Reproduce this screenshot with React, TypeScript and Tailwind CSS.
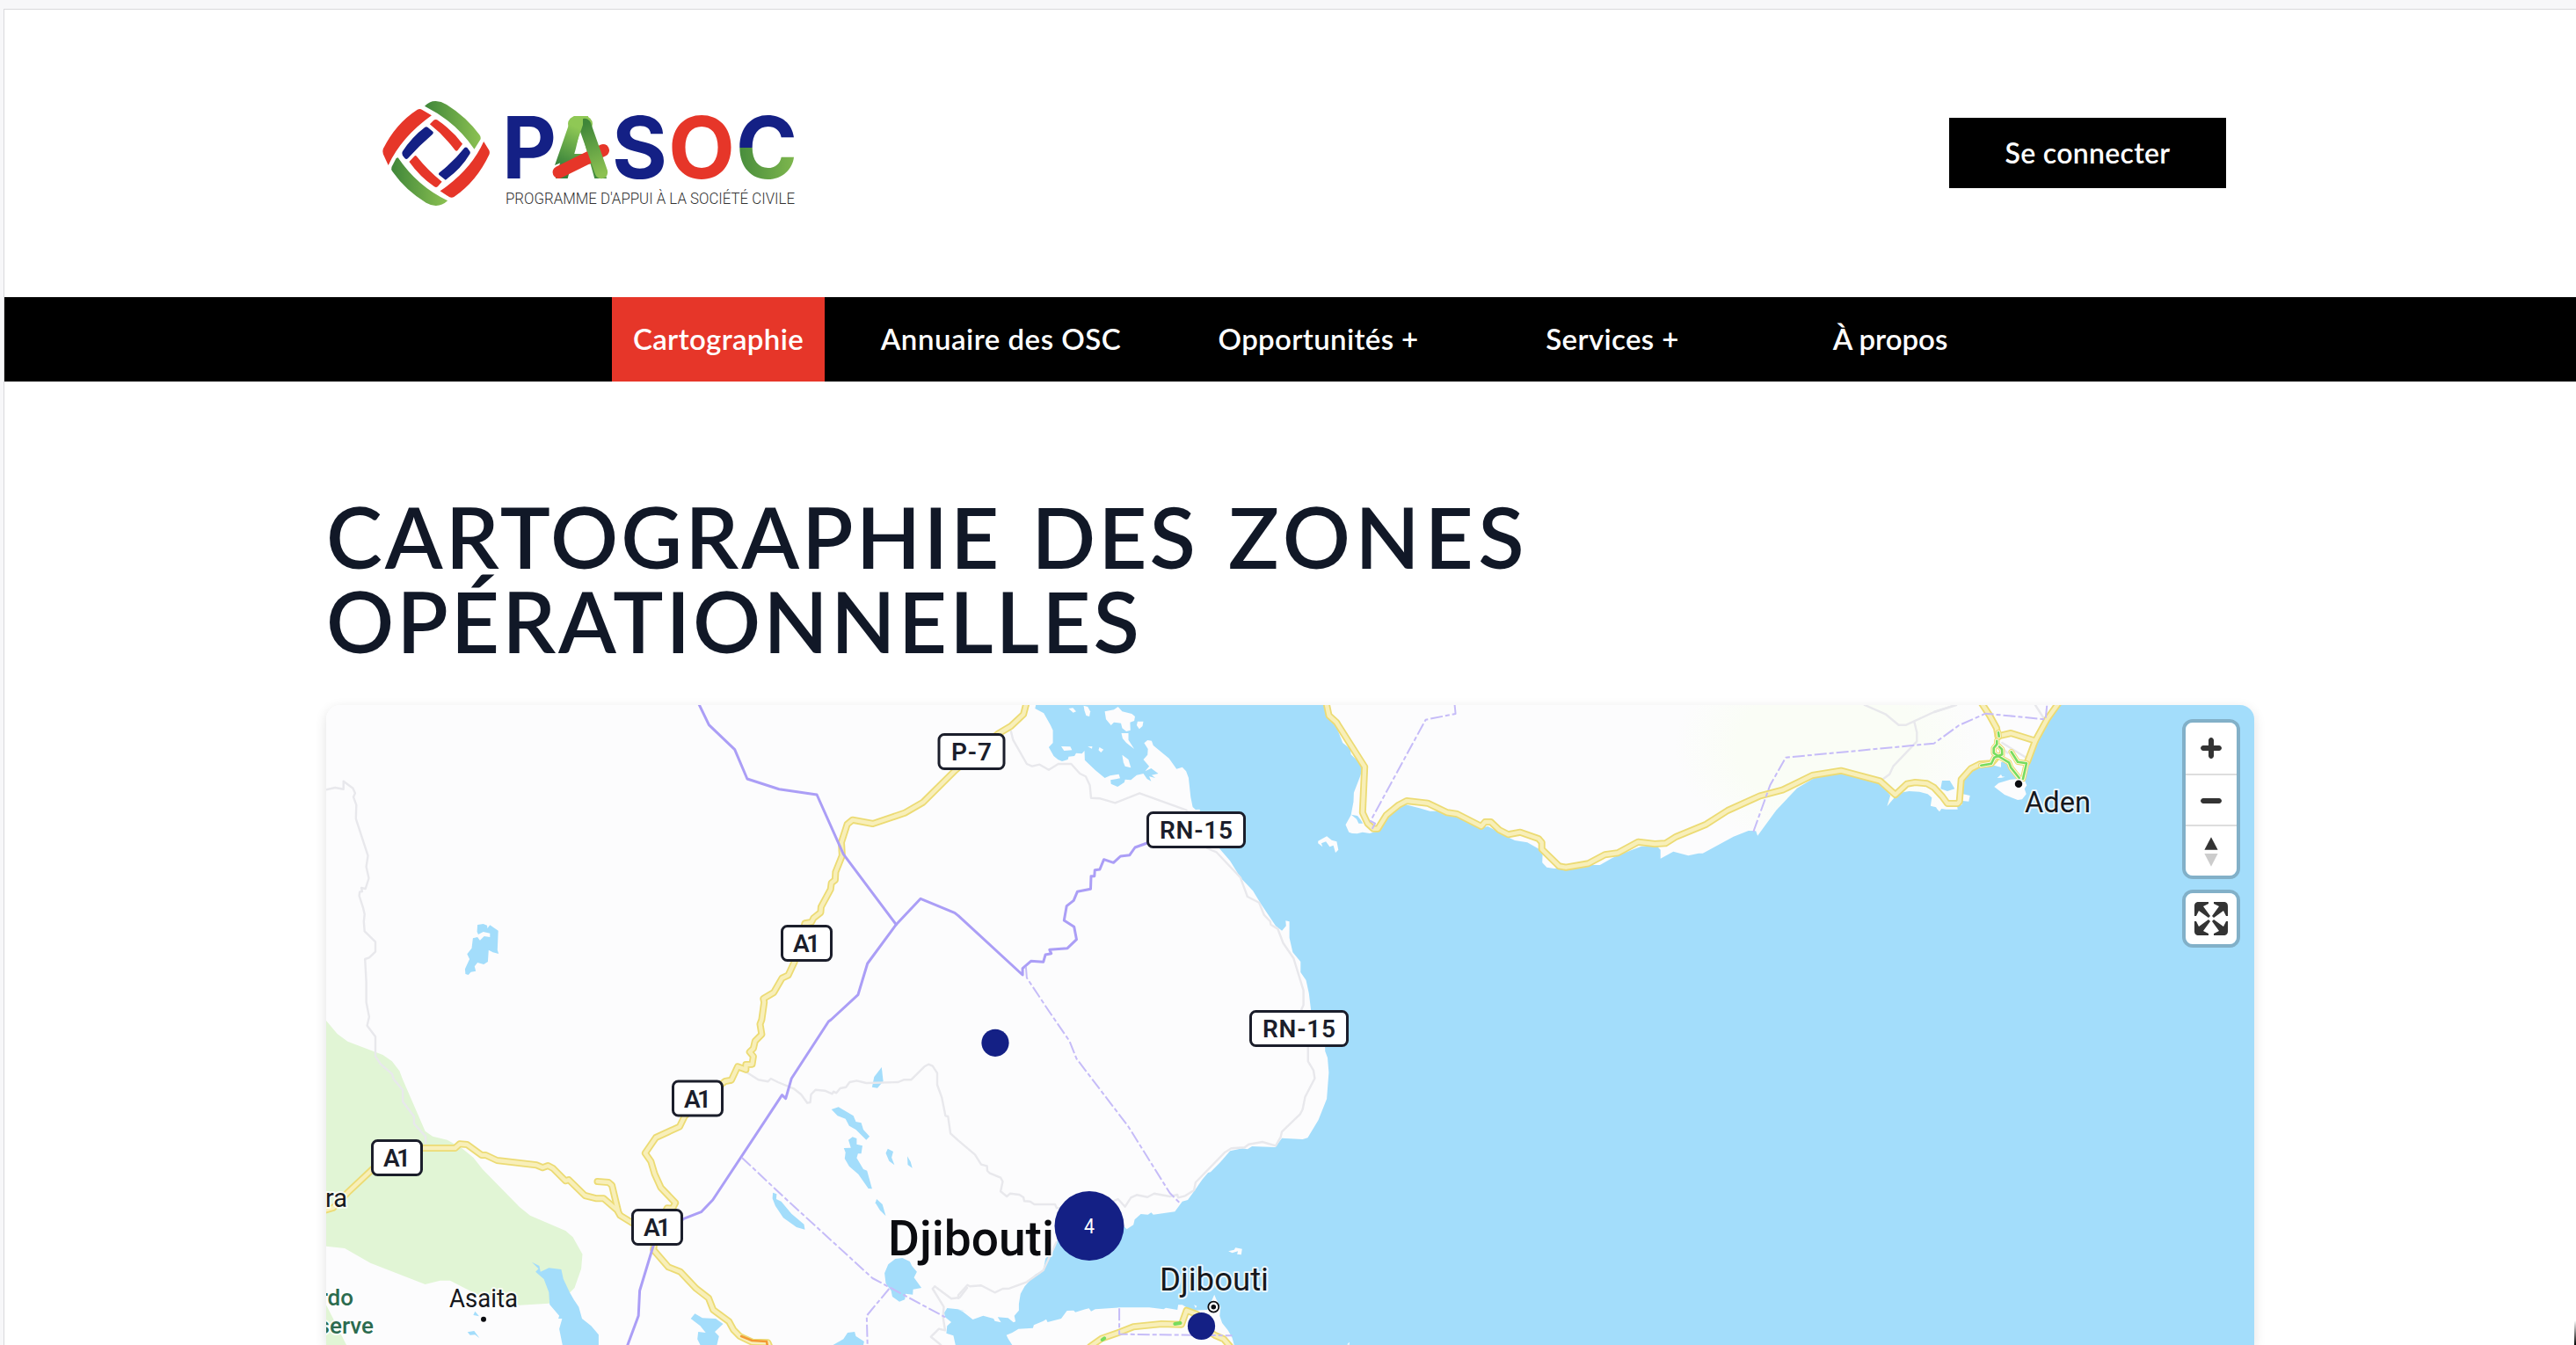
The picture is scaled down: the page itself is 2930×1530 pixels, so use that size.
import type { ReactNode } from "react";

type Sheet = { x: number; y: number; sx: number; sy: number };

const NW: Sheet = { x: 360, y: 790, sx: 2.119, sy: 3 };
const N: Sheet = { x: 1090, y: 790, sx: 2.119, sy: 3 };
const SW: Sheet = { x: 360, y: 1150, sx: 2.119, sy: 3 };
const S: Sheet = { x: 1090, y: 1150, sx: 2.119, sy: 3 };
const NE: Sheet = { x: 1480, y: 790, sx: 2.119, sy: 3 };
const ADEN: Sheet = { x: 2200, y: 790, sx: 3, sy: 3 };

const pts = (sheet: Sheet, coords: string) =>
  coords
    .trim()
    .split(/\s+/)
    .map((pair) => {
      const [x, y] = pair.split(",").map(Number);
      return `${(sheet.x + x / sheet.sx).toFixed(1)},${(sheet.y + y / sheet.sy).toFixed(1)}`;
    })
    .join(" ") + " ";

const sea =
  pts(N, "187,36 185,48 206,64 222,104 228,122 228,165 218,180 230,210 240,222 250,228 264,222 266,212 280,210 284,200 298,202 304,192 305,224 330,258 353,285 366,277 387,272 390,286 367,292 368,305 384,315 400,300 402,290 416,292 430,275 446,270 455,288 465,296 460,280 475,285 466,275 482,270 465,252 450,262 460,245 446,222 456,206 457,186 448,166 456,156 466,158 470,174 508,218 526,254 540,248 549,262 555,284 560,350 565,384 572,393 582,392 582,420 629,525 655,568 680,625 710,670 728,712 765,790 780,806 790,790 789,772 798,775 798,830 806,880 825,912 825,948 838,975 845,1020 850,1076") +
  pts(S, "884,125 884,137 890,160 893,210 888,300 868,372 842,433 830,438 780,434 764,465 708,462 697,472 685,469 655,478 632,515 608,550 602,552 588,575 570,612 553,645 540,650 522,685 470,695 465,688 457,695 440,693 425,712 422,730 406,745 399,735 240,780 228,820 210,845 205,885 185,900 160,940 150,965 146,1000 146,1022 135,1040 138,1060 133,1063 120,1048 95,1045 103,1063 88,1058 85,1050 60,1040 35,1053 10,1025 0,1020") +
  pts(SW, "1568,1026 1545,1018 1520,1014 1513,1030 1515,1045 1530,1062 1520,1075 1518,1100 1535,1108 1540,1140") +
  pts(S, "130,1140 120,1118 116,1106 130,1098 145,1085 180,1082 182,1072 205,1058 212,1052 215,1062 248,1050 262,1023 278,1022 282,1028 306,1018 315,1015 320,1025 330,1018 390,1012 460,1012 495,1018 500,1013 528,1020 530,1003 540,1003 550,1012 560,1022 600,1020 612,985 617,968 622,985 632,1010 630,1040 636,1065 650,1090 660,1115 665,1140") +
  "2564,1530 2564,802 " +
  pts(ADEN, "428,36 410,55 350,165 325,230 308,292 316,310 308,322 314,340 300,358 285,360 240,342 205,315 220,302 260,290 285,288 275,265 262,242 250,232 238,228 228,232 228,248 195,240 165,248 130,260 102,290 98,340 122,345 118,365 90,362 95,376 78,380 80,392 40,392 25,390 18,400 0,380") +
  pts(NE, "1537,400 1530,385 1517,380 1520,352 1510,340 1490,332 1465,330 1445,335 1430,352 1412,382 1420,345 1395,300 1300,268 1240,282 1195,320 1145,395 1100,482 1096,466 1078,465 1042,485 968,542 958,542 933,550 897,536 866,560 866,530 858,518 820,518 770,545 750,558 720,582 700,582 610,594 592,590 581,574 582,535 545,505 515,498 500,488 450,450 430,455 380,418 340,398 310,398 285,388 250,375 235,385 210,412 188,465 165,474 148,470 135,475 123,474 115,470 107,445 120,412 126,366 127,335 142,280 150,245 120,205 118,185 100,165 85,110 60,75 55,36");

const parks = [
  pts(SW, "23,33 50,78 75,104 160,150 182,172 200,205 208,235 262,410 280,428 315,440 350,468 378,500 400,540 490,670 515,698 600,750 618,772 641,830 638,880 622,945 608,965 560,998 490,1004 400,975 360,948 322,920 298,920 262,933 130,860 68,810 23,803"),
  pts(SW, "23,1002 72,1140 23,1140"),
];

const lakes = [
  pts(NW, "388,786 402,783 411,788 412,798 418,787 438,806 436,872 439,885 425,880 415,872 413,912 403,921 388,915 381,928 384,944 372,947 366,957 359,954 358,937 369,903 363,886 374,866 377,832 388,828 394,839 404,825 418,828 418,815 402,810 390,819 387,810"),
  pts(SW, "519,857 537,870 540,890 560,877 590,882 595,915 610,960 620,985 632,1010 640,1050 662,1075 680,1105 680,1140 593,1140 585,1085 592,1050 583,1050 585,1040 562,1002 560,960 548,915 528,890 535,880"),
  pts(SW, "1362,192 1366,240 1352,263 1339,260 1344,225"),
  pts(SW, "1241,336 1258,328 1294,358 1300,378 1313,382 1318,405 1333,428 1325,440 1300,405 1284,392 1275,368 1256,358"),
  pts(SW, "1282,440 1292,430 1302,435 1302,455 1316,460 1313,487 1305,487 1302,502 1318,540 1327,545 1339,607 1330,606 1306,557 1284,530 1273,504 1275,483 1271,468 1288,467"),
  pts(SW, "1377,470 1390,480 1386,500 1393,526 1380,512 1372,485"),
  pts(SW, "1424,496 1432,515 1436,536 1425,525"),
  pts(SW, "1350,642 1364,660 1372,700 1358,680 1347,655"),
  pts(SW, "1100,620 1109,625 1108,642 1120,650 1145,692 1175,728 1177,746 1157,738 1125,706 1106,665 1099,640"),
  pts(SW, "1395,846 1412,843 1430,855 1435,870 1447,890 1440,910 1458,945 1438,950 1437,968 1420,965 1418,985 1405,992 1388,975 1385,955 1372,930 1369,895 1378,865"),
  pts(SW, "902,1050 912,1033 930,1048 962,1050 980,1068 960,1095 970,1110 965,1140 925,1140 918,1120 920,1095 938,1098 925,1075"),
  pts(SW, "1245,1140 1270,1120 1280,1098 1297,1095 1300,1110 1320,1128 1318,1140"),
  pts(SW, "382,1025 388,1035 392,1042 378,1038"),
  pts(SW, "364,1096 380,1092 393,1117 382,1105 370,1106"),
  pts(N, "947,410 962,414 970,428 975,440 965,440 960,425"),
  pts(ADEN, "27,294 53,294 70,322 45,330 22,322"),
];

const islands = [
  pts(N, "266,48 276,46 284,58 277,62"),
  pts(N, "302,38 312,42 318,58 316,75 308,72 304,55"),
  pts(N, "353,58 375,52 385,42 395,58 418,66 426,75 424,90 414,95 415,122 405,126 395,115 392,98 375,95 368,105 356,85"),
  pts(N, "432,92 446,92 444,108 436,118 430,105"),
  pts(N, "393,132 410,132 410,155 424,186 405,165 396,150"),
  pts(N, "248,177 270,178 274,190 255,192"),
  pts(N, "312,178 323,177 322,185"),
  pts(N, "340,180 350,188 344,198 338,190"),
  pts(N, "395,206 410,222 416,250 402,245 398,232"),
  pts(N, "867,500 888,484 900,497 912,502 916,530 909,540 904,515 895,520 886,502 875,508 878,520 867,508"),
  pts(S, "651,820 665,815 668,808 684,812 682,832 672,830 674,820 660,826"),
  pts(S, "568,1003 575,1007 572,1014"),
  pts(S, "937,1138 943,1130 942,1140"),
  pts(ADEN, "215,285 228,273 232,280 242,281 230,284"),
];

const roads = [
  pts(N, "163,36 157,68 127,108 95,135") +
    pts(NW, "1540,258 1462,368 1418,404 1341,441 1292,428 1279,443 1265,505 1267,550 1251,606 1250,633 1241,643 1239,665 1216,725 1215,744 1198,763 1193,777 1177,781 1165,850 1152,912 1137,958 1122,968 1102,1017 1077,1038 1079,1050 1073,1110") +
    pts(SW, "1069,45 1073,80 1057,103 1053,128 1044,140 1053,155 1050,182 1035,183 1035,200 1015,190 1000,236 985,240 930,300 887,360 875,395 818,432 792,485 806,514 815,556 830,603 865,655 858,674 845,673 820,740 812,815 848,874 877,890 915,947 945,980 956,1020 994,1060 1005,1088 1020,1110 1050,1130 1088,1132 1092,1145"),
  pts(SW, "20,680 40,672 75,620 135,540 190,468 256,468 334,468 345,454 363,456 398,492 408,492 435,510 530,526 545,535 558,528 570,537 600,580 608,576 647,630 675,640 692,640 725,680 732,698 780,740"),
  pts(SW, "677,582 704,585 712,595 727,683"),
  pts(NE, "61,33 67,72 85,95 153,247 148,403 160,440 174,458 185,458 205,412 235,377 254,363 305,371 352,403 376,408 434,450 443,435 457,435 478,463 499,478 528,470 572,492 580,505 580,528 622,586 638,590 692,577 732,547 763,541 812,503 852,510 878,508 904,485 976,443 1028,396 1106,346 1160,326 1232,276 1301,260 1395,295 1432,342 1460,305 1480,300 1508,304 1525,317 1545,348") +
    pts(ADEN, "45,372 80,372 86,365 92,290 125,253 155,238 195,235 215,212"),
  pts(ADEN, "162,30 188,70 213,115 218,145"),
  pts(ADEN, "218,142 262,132 345,158"),
  pts(ADEN, "424,30 385,85 345,158 318,230"),
  pts(S, "318,1145 345,1118 390,1096 422,1078 490,1068 538,1070 550,1022 575,1035"),
  pts(S, "600,1090 620,1108 640,1120 655,1145"),
];

const cityRoads = [
  pts(ADEN, "160,242 195,236 205,215 218,210 255,232 262,250 290,285"),
  pts(ADEN, "263,196 285,230 315,235 303,288"),
  pts(ADEN, "218,210 203,200 203,183 214,170 214,158"),
  pts(ADEN, "218,210 232,205 231,187 222,178"),
  pts(ADEN, "219,130 221,143"),
];

const streets = [
  pts(NW, "23,325 45,318 65,323 65,296 88,320 93,337 89,350 96,377 95,424 124,550 120,588 126,627 118,663 108,660 110,672 104,674 103,687 112,727 116,750 114,775 116,808 142,844 142,878 127,898 117,903 120,980 120,1050 127,1100") +
    pts(SW, "122,50 142,88 142,155 155,182 182,215 186,233 208,270 208,310 235,360 235,385 263,428 263,450"),
  pts(N, "127,125 132,155 165,237 178,245 196,239 218,257 241,237 272,237 293,270 307,280 317,310 320,353 342,355 378,370 437,337 550,395 600,525 622,538 680,625 697,690 725,710 737,752 752,775 753,785 770,800 783,848 808,900 832,1010 832,1060 827,1075") +
    pts(S, "843,120 843,172 856,203 859,230 836,293 830,335 824,352 780,412 777,430 765,460 733,447 700,455 690,466 658,469 643,482 572,585 568,612 545,632 530,637 528,627 510,633 472,623 456,635 430,628 416,637 402,668 385,642 300,690 237,672 233,660 183,660 173,650 159,649 157,636 147,627 125,623 117,633 102,616 107,582 102,569 75,553 70,545 69,529 55,524 40,490 0,442") +
    pts(SW, "1528,418 1522,360 1516,358 1507,295 1496,252 1496,212 1485,188 1475,182 1465,190 1433,235 1415,235 1402,243 1325,246 1302,238 1285,243 1276,260 1262,264 1253,280 1246,275 1243,283 1225,272 1203,269 1192,285 1190,312 1183,314 1168,285 1150,265 1112,243 1095,231 1088,241 1065,235 1035,208"),
  pts(NE, "1358,36 1408,67 1440,104 1458,104 1525,60 1568,40"),
  pts(NE, "1478,95 1484,130 1484,160 1427,245 1418,272 1403,288"),
  pts(ADEN, "0,60 75,36"),
  pts(ADEN, "345,36 372,78"),
  pts(ADEN, "232,165 318,218"),
  pts(ADEN, "225,175 250,200"),
  pts(SW, "1568,945 1550,978 1530,982 1490,940 1485,948 1512,1010 1510,1045 1515,1090 1500,1085 1481,1112 1505,1140"),
  pts(S, "236,790 205,885 165,925 123,947 107,948 88,961 55,937 28,940 22,935 0,970 0,980"),
];

const borders = [
  pts(NW, "922,34 946,104 1008,188 1038,288 1115,323 1206,342 1270,545 1397,785"),
  pts(N, "455,507 426,522 413,548 391,552 374,574 351,563 341,597 329,599 328,620 320,620 319,664 287,673 278,703 261,722 255,771 279,793 285,836 263,866 220,871 224,884 210,888 205,913 175,910 155,935 155,957 0,755") +
    pts(NW, "1538,745 1456,697 1397,785 1328,918 1305,1025 1240,1110") +
    pts(SW, "1234,36 1145,230 1131,299 1122,287 955,645 927,686 885,709 812,800 779,955 776,1040 749,1143"),
];

const regionBorders = [
  pts(N, "163,930 165,967 218,1080") + pts(S, "268,103 285,163 410,395 510,622 536,658"),
  pts(SW, "1025,500 1130,640 1340,912 1515,1045"),
  pts(SW, "1380,948 1326,1040 1328,1140"),
  pts(NE, "370,36 372,66 300,86 167,432 178,440 170,462"),
  pts(NE, "1090,468 1130,310 1168,215 1525,167") + pts(ADEN, "85,105 175,65 380,85 385,36"),
  pts(S, "388,1015 388,1103 660,1108"),
];

const shields = [
  { x: 1068, y: 835.5, w: 74, label: "P-7", tw: 46 },
  { x: 1305.5, y: 924.5, w: 110, label: "RN-15", tw: 83 },
  { x: 1422.5, y: 1150.5, w: 110, label: "RN-15", tw: 83 },
  { x: 889.5, y: 1053.5, w: 56, label: "A1", tw: 31 },
  { x: 765.5, y: 1230, w: 56, label: "A1", tw: 31 },
  { x: 423.5, y: 1297.5, w: 56, label: "A1", tw: 31 },
  { x: 719.5, y: 1376.5, w: 56, label: "A1", tw: 31 },
];

const Lines = ({ data, color, width, dash }: { data: string[]; color: string; width: number; dash?: string }) => (
  <g fill="none" stroke={color} strokeWidth={width} strokeDasharray={dash} strokeLinejoin="round" strokeLinecap={dash ? "butt" : "round"}>
    {data.map((points) => (
      <polyline key={points} points={points} />
    ))}
  </g>
);

const Shapes = ({ data, color }: { data: string[]; color: string }) => (
  <g fill={color}>
    {data.map((points) => (
      <polygon key={points} points={points} />
    ))}
  </g>
);

const CarteDjibouti = () => (
  <svg className="block h-[728px] w-[2193px] rounded-t-2xl" viewBox="371 802 2193 728" fontFamily="Roboto, sans-serif">
    <defs>
      <radialGradient id="plain">
        <stop offset="0.6" stopColor="#fafdf6" />
        <stop offset="1" stopColor="#fafdf6" stopOpacity="0" />
      </radialGradient>
    </defs>
    <rect x="371" y="802" width="2193" height="728" fill="#fcfcfd" />
    <ellipse cx="2080" cy="850" rx="175" ry="120" fill="url(#plain)" />
    <Shapes data={parks} color="#e1f5d5" />
    <Shapes data={[sea, ...lakes]} color="#a3ddfb" />
    <Shapes data={islands} color="#fcfcfd" />
    <Lines data={streets} color="#e8e8ec" width={2.4} />
    <Lines data={roads} color="#ecdb74" width={8} />
    <Lines data={roads} color="#f8efb9" width={4.4} />
    <Lines data={cityRoads} color="#ecdb74" width={6.5} />
    <Lines data={cityRoads} color="#fdfbe9" width={4.4} />
    <Lines data={cityRoads} color="#78dc5e" width={2.6} />
    <Lines data={[pts(S, "522,1068 535,1065"), pts(S, "347,1122 352,1117")]} color="#78dc5e" width={4} />
    <Lines data={[pts(SW, "1024,1110 1050,1125 1085,1128 1087,1145")]} color="#f39a35" width={2.6} />
    <Lines data={borders} color="#ab9ef6" width={3} />
    <Lines data={regionBorders} color="#c6bcf8" width={2} dash="14 3 5 3" />

    {shields.map((s) => (
      <g key={`${s.x}-${s.y}`}>
        <rect x={s.x} y={s.y} width={s.w} height="39" rx="6" fill="#fff" stroke="#1b1e2b" strokeWidth="3" />
        <text x={s.x + s.w / 2} y={s.y + 29.5} textAnchor="middle" fontSize="28" fontWeight="600" fill="#1b1e2b" textLength={s.tw}>
          {s.label}
        </text>
      </g>
    ))}

    {/* Noms de lieux */}
    <g fill="#16181d" stroke="#fff" strokeWidth="4" strokeOpacity="0.75" strokeLinejoin="round" paintOrder="stroke">
      <text x="1010" y="1428" fontSize="56" fontWeight="500" fill="#0b0c10" textLength="189" lengthAdjust="spacingAndGlyphs">Djibouti</text>
      <text x="1319" y="1467.5" fontSize="36" textLength="124" lengthAdjust="spacingAndGlyphs">Djibouti</text>
      <text x="511" y="1486.5" fontSize="29" textLength="78" lengthAdjust="spacingAndGlyphs">Asaita</text>
      <text x="2303" y="924" fontSize="34" textLength="75" lengthAdjust="spacingAndGlyphs">Aden</text>
      <text x="395" y="1373" fontSize="29" textAnchor="end">ra</text>
      <g fill="#2c6b4f" fontSize="26" fontWeight="500" textAnchor="end">
        <text x="402" y="1485">rdo</text>
        <text x="425" y="1517">serve</text>
      </g>
    </g>
    <circle cx="550" cy="1500.7" r="3" fill="#0b0c10" />
    <circle cx="2296" cy="891.7" r="5" fill="#0b0c10" stroke="#fff" strokeWidth="1.5" />
    <circle cx="1380.3" cy="1486.7" r="6" fill="#fff" stroke="#0b0c10" strokeWidth="1.8" />
    <circle cx="1380.3" cy="1486.7" r="2.8" fill="#0b0c10" />

    {/* Marqueurs des OSC */}
    <g fill="#142085">
      <circle cx="1132" cy="1186.3" r="15.6" />
      <circle cx="1366.5" cy="1508.5" r="15.6" />
      <circle cx="1239" cy="1394.6" r="39.5" />
    </g>
    <text x="1239" y="1403" textAnchor="middle" fontSize="24" fill="#fff" textLength="12" lengthAdjust="spacingAndGlyphs">4</text>
  </svg>
);

const ControlButton = ({ label, children }: { label: string; children: ReactNode }) => (
  <button aria-label={label} className="block size-[58px] border-t-2 border-[#ddd] bg-white first:border-t-0">
    <svg viewBox="0 0 29 29" className="size-[58px]" fill="#333">
      {children}
    </svg>
  </button>
);

const Logo = () => (
  <svg className="block h-[160px] w-[540px]" viewBox="0 0 540 160">
    <defs>
      <linearGradient id="vert" x1="0" x2="1">
        <stop offset="0" stopColor="#3f8639" />
        <stop offset="1" stopColor="#8cc152" />
      </linearGradient>
      <linearGradient id="rubanGauche" gradientUnits="userSpaceOnUse" x1="236" y1="100" x2="262" y2="44">
        <stop offset="0" stopColor="#35803a" />
        <stop offset="0.8" stopColor="#8fc855" />
      </linearGradient>
      <linearGradient id="rubanDroit" gradientUnits="userSpaceOnUse" x1="262" y1="52" x2="284" y2="108">
        <stop offset="0" stopColor="#3f8639" />
        <stop offset="1" stopColor="#8cc152" />
      </linearGradient>
      <pattern id="bicolore" patternUnits="userSpaceOnUse" x="430" y="0" width="90" height="160">
        <rect width="90" height="78" fill="#142085" />
        <rect y="78" width="90" height="82" fill="url(#vert)" />
      </pattern>
    </defs>
    <g transform="scale(0.3444 0.3333)">
      <path fill="url(#vert)" d="M241 92Q258 74 278 75Q296 76 312 86Q378 128 422 190Q428 198 425 206L405 239Q343 145 241 92Z" />
      <path fill="#e63629" d="M264 124L233 105Q226 100 217 104Q145 152 104 238Q101 246 104 256L121 294Q165 197 264 124Z" />
      <path fill="url(#vert)" d="M153 268Q217 366 317 415Q298 433 277 432Q262 431 246 422Q180 382 135 316Q129 308 132 300L147 270Z" />
      <path fill="#e63629" d="M436 213L454 243Q457 250 454 258Q412 350 338 402Q330 407 322 402L292 382Q394 310 436 213Z" />
      <path fill="#142085" d="M242 164Q247 161 252 165L269 180Q271 184 267 188Q225 225 186 270Q181 275 176 271L168 260Q164 254 168 247Q198 198 242 164Z" />
      <path fill="#e63629" d="M258 154L271 140Q276 136 282 139Q331 173 366 221L350 243Q346 247 342 243Q305 192 258 154Z" />
      <path fill="#142085" d="M373 234Q378 231 382 235L390 246Q393 250 390 256Q361 307 310 344L288 326Q286 322 290 319Q335 283 373 234Z" />
      <path fill="#e63629" d="M190 282L207 263Q211 259 215 264Q252 312 298 350L284 367Q279 371 273 367Q225 333 190 282Z" />
    </g>
    <g fontFamily="Inter, sans-serif" fontSize="98" fontWeight="700" fill="#142085">
      <text x="171" y="113" textLength="62" lengthAdjust="spacingAndGlyphs">P</text>
      <text x="230" y="113" fill="url(#rubanGauche)" textLength="62" lengthAdjust="spacingAndGlyphs">A</text>
      {/* Rubans par-dessus le A */}
      <g fill="none" strokeLinecap="round">
        <path d="M235.5 106L286 81" stroke="#e63629" strokeWidth="14" />
        <path d="M255 51L265 51" stroke="#8fc855" strokeWidth="18" />
        <path d="M265 52L284 106" stroke="url(#rubanDroit)" strokeWidth="14.5" />
      </g>
      <path d="M249 46L263 43L263 52L250 90L231 98Z" fill="url(#rubanGauche)" />
      <text x="296" y="113" textLength="63" lengthAdjust="spacingAndGlyphs">S</text>
      <text x="360" y="113" fill="#e63629" textLength="76" lengthAdjust="spacingAndGlyphs">O</text>
      <text x="437" y="113" fill="url(#bicolore)" textLength="70" lengthAdjust="spacingAndGlyphs">C</text>
    </g>
    <text x="175" y="141.7" fontFamily="Roboto, sans-serif" fontSize="17.5" fontWeight="300" fill="#333" textLength="329" lengthAdjust="spacingAndGlyphs">
      PROGRAMME D'APPUI À LA SOCIÉTÉ CIVILE
    </text>
  </svg>
);

const App = () => {
  return (
    <div className="relative h-[1530px] w-[2930px] overflow-hidden bg-[#f7f7f9] pl-1 pt-2.5 font-['Lato',sans-serif]">
      <div className="h-full border-l border-t border-[#d9d9dc] bg-white">
        <header className="flex h-[327px] items-start justify-between pl-[395px] pr-[398px] pt-[79px]">
          <Logo />
          <button className="mt-11 h-20 w-[315px] bg-black text-[32px] font-semibold tracking-[0.3px] text-white">
            Se connecter
          </button>
        </header>

        <nav className="flex h-24 items-center bg-black pl-[691px] text-center text-[33px] font-semibold leading-[94px] tracking-[0.35px] text-white">
          <a className="w-[242px] bg-[#e63629] pb-0.5">Cartographie</a>
          <a className="w-[401px] pb-0.5 tracking-[0.5px]">Annuaire des OSC</a>
          <a className="w-[321px] pb-0.5">Opportunités +</a>
          <a className="w-[348px] pb-0.5">Services +</a>
          <a className="w-[284px] pb-0.5 tracking-normal">À propos</a>
        </nav>

        <main className="pl-[366px] pt-[128px]">
          <h1 className="w-[1500px] text-[96px] font-semibold uppercase leading-[96px] tracking-[3px] text-[#111827]">
            <span className="[word-spacing:7px]">Cartographie des </span>
            <span className="tracking-[5.4px]">zones</span> opérationnelles
          </h1>

          <div className="relative mt-12 w-[2193px] rounded-t-2xl shadow-[0_4px_14px_rgba(0,0,0,0.12)]">
            <CarteDjibouti />
            <div className="absolute right-5 top-5 flex flex-col gap-5">
              <div className="overflow-hidden rounded-lg shadow-[0_0_0_4px_rgba(0,0,0,0.2)]">
                <ControlButton label="Zoom avant">
                  <path d="M14.5 8.5c-.75 0-1.5.75-1.5 1.5v3h-3c-.75 0-1.5.75-1.5 1.5S9.25 16 10 16h3v3c0 .75.75 1.5 1.5 1.5S16 19.75 16 19v-3h3c.75 0 1.5-.75 1.5-1.5S19.75 13 19 13h-3v-3c0-.75-.75-1.5-1.5-1.5z" />
                </ControlButton>
                <ControlButton label="Zoom arrière">
                  <path d="M10 13c-.75 0-1.5.75-1.5 1.5S9.25 16 10 16h9c.75 0 1.5-.75 1.5-1.5S19.75 13 19 13h-9z" />
                </ControlButton>
                <ControlButton label="Nord">
                  <path d="M10.7 13.4l3.8-7.3 3.8 7.3z" />
                  <path d="M10.7 15.5l3.8 7.4 3.8-7.4z" fill="#ccc" />
                </ControlButton>
              </div>
              <div className="overflow-hidden rounded-lg shadow-[0_0_0_4px_rgba(0,0,0,0.2)]">
                <ControlButton label="Plein écran">
                  <path d="M24 16v5.5c0 1.75-.75 2.5-2.5 2.5H16v-1l3-1.5-4-5.5 1-1 5.5 4 1.5-3h1zM6 16l1.5 3 5.5-4 1 1-4 5.5 3 1.5v1H7.5C5.75 24 5 23.25 5 21.5V16h1zm7-11v1l-3 1.5 4 5.5-1 1-5.5-4L6 13H5V7.5C5 5.75 5.75 5 7.5 5H13zm11 2.5c0-1.75-.75-2.5-2.5-2.5H16v1l3 1.5-4 5.5 1 1 5.5-4 1.5 3h1V7.5z" />
                </ControlButton>
              </div>
            </div>
          </div>
        </main>
      </div>
      <div className="absolute bottom-0 right-0 h-7 w-0.5 rounded-tl-full bg-linear-to-b from-transparent to-black" />
    </div>
  );
};

export default App;
